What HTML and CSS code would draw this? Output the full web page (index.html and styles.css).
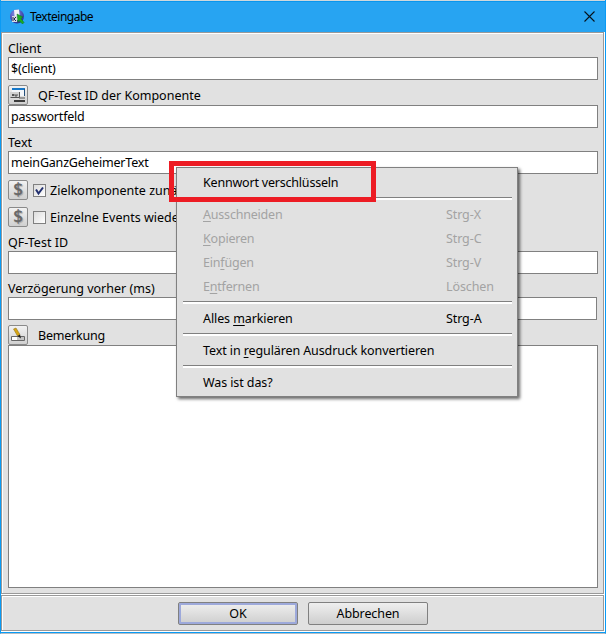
FILE: index.html
```html
<!DOCTYPE html>
<html lang="de">
<head>
<meta charset="utf-8">
<title>Texteingabe</title>
<link rel="stylesheet" href="styles.css">
</head>
<body>
<div class="window">
  <header class="titlebar">
    <svg class="app-icon" width="16" height="16" viewBox="0 0 16 16">
      <defs><radialGradient id="ball" cx=".4" cy=".3" r=".7"><stop offset="0" stop-color="#8d92e8"/><stop offset="1" stop-color="#2b2f9c"/></radialGradient></defs>
      <circle cx="8" cy="7.500" r="7" fill="url(#ball)"/>
      <path d="M5 1l5-.5 1 10-5 1z" fill="#f1f1f8"/>
      <path d="M3 7h5v6H3z" fill="#d9dbe4"/>
      <path d="M4 8v4M7 8l-2 2 2 2" stroke="#20264c" fill="none"/>
      <path d="M8 5l6 3-2 1.500 3 4-1.500 1.500-3.500-3.500-1 2z" fill="#1bad22" stroke="#087022" stroke-width=".5"/>
    </svg>
    <span class="title">Texteingabe</span>
    <svg class="close" width="11" height="11" viewBox="0 0 11 11"><path d="M.5.5l10 10M10.500.5l-10 10" stroke="#07131c" stroke-width="1.100"/></svg>
  </header>

  <main class="form">
    <div class="label label-client"><span class="tight">Client</span></div>
    <div class="input"><span class="value">$(client)</span></div>
    <div class="label label-tool">
      <span class="tool"><svg width="18" height="18" viewBox="0 0 18 18">
        <path d="M3 2h13v8H3z" fill="#f3f6fa"/><path d="M3 2h13v2H3z" fill="#1677c8"/><path d="M15 3h1v7h-1z" fill="#25507c"/>
        <path d="M1 6h9v6H1z" fill="#d2d2d2"/><path d="M1.500 11.500h9V6" stroke="#555" fill="none"/>
        <path d="M3 8l2 2m0-2l-2 2m3-2v2h2V8" stroke="#333" fill="none" stroke-width=".8"/>
        <path d="M10 12h6" stroke="#555" stroke-width="1"/><path d="M5 15h11" stroke="#3d3d3d" stroke-width="2"/>
      </svg></span>
      <span>QF-Test ID der Komponente</span>
    </div>
    <div class="input"><span class="value">passwortfeld</span></div>
    <div class="label label-text"><span>Text</span></div>
    <div class="input"><span class="value">meinGanzGeheimerText</span></div>
    <div class="check-row">
      <span class="tool dollar">$</span>
      <span class="box"><svg width="11" height="11" viewBox="0 0 11 11"><path d="M2 4.500l2.500 4L9 2.500" fill="none" stroke="#22306f" stroke-width="2"/></svg></span>
      <span>Zielkomponente zunäc</span>
    </div>
    <div class="check-row second">
      <span class="tool dollar">$</span>
      <span class="box"></span>
      <span>Einzelne Events wiede</span>
    </div>
    <div class="label label-id"><span>QF-Test ID</span></div>
    <div class="input"></div>
    <div class="label label-delay"><span>Verzögerung vorher (ms)</span></div>
    <div class="input short"></div>
    <div class="label label-note">
      <span class="tool"><svg width="18" height="18" viewBox="0 0 18 18">
        <path d="M2.500 10.500h13v4h-13z" fill="#fff" stroke="#666"/><path d="M8 11h7v3H8z" fill="#c4c4c4"/>
        <path d="M4.500 3l2.500-1 4 6.500-2.500 1.500z" fill="#d6a516" stroke="#8b6a10" stroke-width=".5"/><path d="M8.500 10l2.500-1.500 1 4z" fill="#1d1d1d"/>
      </svg></span>
      <span class="tighter">Bemerkung</span>
    </div>
    <div class="notes"></div>
  </main>

  <footer class="actions">
    <div class="button primary">OK</div>
    <div class="button">Abbrechen</div>
  </footer>

  <div class="menu">
    <div class="item tighter"><span>Kennwort verschlüsseln</span></div>
    <div class="sep"></div>
    <div class="item off"><span><u>A</u>usschneiden</span><span>Strg-X</span></div>
    <div class="item off"><span><u>K</u>opieren</span><span>Strg-C</span></div>
    <div class="item off"><span>Ein<u>f</u>ügen</span><span>Strg-V</span></div>
    <div class="item off"><span>E<u>n</u>tfernen</span><span>Löschen</span></div>
    <div class="sep"></div>
    <div class="item"><span>Alles <u>m</u>arkieren</span><span>Strg-A</span></div>
    <div class="sep"></div>
    <div class="item"><span>Text in <u>r</u>egulären Ausdruck konvertieren</span></div>
    <div class="sep"></div>
    <div class="item"><span>Was ist das?</span></div>
  </div>
  <div class="highlight"></div>
</div>
</body>
</html>
```
FILE: styles.css
```css
* { box-sizing: border-box; }
body { margin: 0; background: #d0d8dc; font-family: "Noto Sans", sans-serif; font-size: 12.5px; color: #000; }
.window { position: relative; width: 606px; height: 634px; display: flex; flex-direction: column; background: #fff; border: 1px solid #0a9bf5; border-top: 0; border-bottom: 1px solid #b5bdc4; overflow: hidden; white-space: nowrap; }
.titlebar { height: 32px; flex: none; display: flex; align-items: center; padding: 2px 10px 0 8px; background: #27a4f2; border-top: 1px solid #d0d8dc; box-shadow: inset 0 1px #0a96ed; }
.app-icon { margin-top: -2px; }
.title { margin: -2px 0 0 5px; font-size: 12px; letter-spacing: -.5px; }
.close { margin: -3px 0 0 auto; }
.form { height: 562px; flex: none; margin: 0 1px 0 0; padding: 7px 5px 0 6px; background: #e1e1e1; border: 1px solid #999; box-shadow: inset 1px 1px #fff; }
.label { display: flex; align-items: center; height: 17px; line-height: 17px; }
.label-tool { height: 20px; margin-top: 5px; }
.label-text { margin-top: 6px; }
.label-id { margin-top: 7px; }
.label-delay { margin-top: 6px; }
.label-note { height: 20px; margin-top: 5px; }
.tight { letter-spacing: -.1px; }
.tighter { letter-spacing: -.2px; }
.value { letter-spacing: -.2px; }
.input { height: 23px; border: 1px solid #808080; background: #fff; padding: 0 2px; line-height: 21px; }
.input.short { width: 589px; }
.tool { width: 20px; height: 20px; flex: none; border: 1px solid #8a8a8a; border-radius: 2px; background: linear-gradient(#f2f2f2, #d0d0d0); margin-right: 10px; }
.tool svg { display: block; }
.dollar { font: 600 17px/17px "Noto Sans", sans-serif; color: #696969; text-align: center; margin-right: 5px; text-shadow: 1px 1px 1px #aaa; }
.check-row { height: 20px; display: flex; align-items: center; margin-top: 6px; width: 168px; }
.check-row.second { margin-top: 7px; }
.box { width: 13px; height: 13px; flex: none; border: 1px solid #808080; background: linear-gradient(135deg, #dcdcdc, #fff); margin-right: 4px; }
.box svg { display: block; }
.notes { height: 243px; border: 1px solid #808080; background: #fff; }
.actions { height: 36px; flex: none; margin: 1px 1px 0 0; padding-top: 6px; display: flex; justify-content: center; gap: 10px; background: #e1e1e1; border: 1px solid #999; box-shadow: inset 1px 1px #fff; }
.window::after { content: ""; margin-top: 1px; height: 1px; flex: none; background: #0a9bf5; }
.button { width: 120px; height: 23px; border: 1px solid #808080; border-radius: 2px; background: linear-gradient(#efefef, #cecece); text-align: center; line-height: 21px; letter-spacing: -.1px; text-indent: 1px; }
.primary { box-shadow: inset 0 0 0 2px #9da9db; }
.menu { position: absolute; left: 175px; top: 167px; width: 342px; height: 230px; padding-top: 3px; background: #e1e1e1; border: 1px solid #808080; box-shadow: 2px 2px 3px rgba(0,0,0,.6); }
.item { height: 24px; display: grid; grid-template-columns: 243px 1fr; padding-left: 26px; line-height: 24px; letter-spacing: -.1px; }
.item.tighter { letter-spacing: -.2px; }
.off { color: #a3a3a3; }
.off span:first-child { letter-spacing: -.2px; }
.sep { height: 8px; margin: 0 5px 0 6px; padding-top: 2px; }
.sep::before { content: ""; display: block; height: 2px; border-top: 1px solid #808080; background: #fff; }
.highlight { position: absolute; left: 168px; top: 161px; width: 207px; height: 41px; border: 5px solid #ed1c24; }
u { text-decoration-thickness: 1px; text-underline-offset: 2px; }
```
